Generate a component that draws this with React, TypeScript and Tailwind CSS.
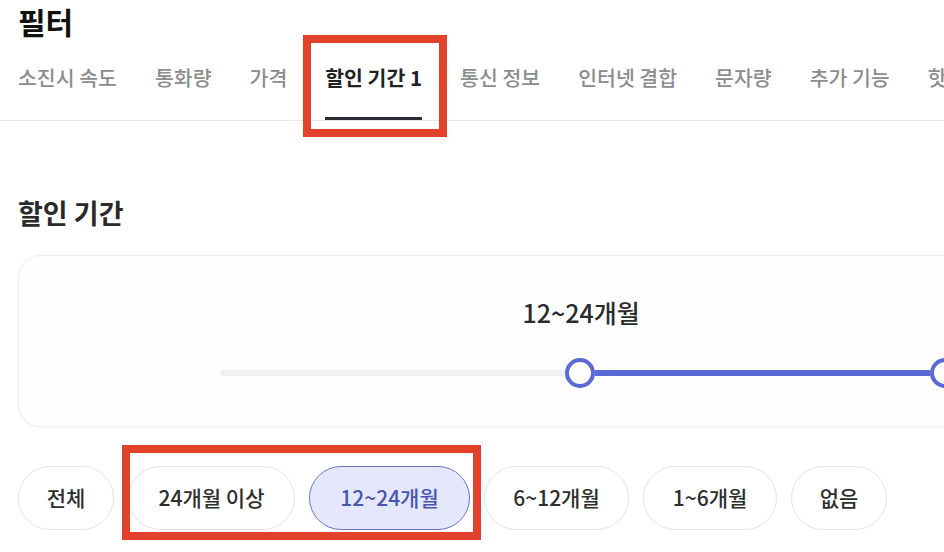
import React from "react";

const tabs = ["소진시 속도", "통화량", "가격", "할인 기간 1", "통신 정보", "인터넷 결합", "문자량", "추가 기능", "핫스팟"];

const chips = [
  { label: "전체", w: "w-[96px]", active: false },
  { label: "24개월 이상", w: "w-[167px]", active: false },
  { label: "12~24개월", w: "w-[161px]", active: true },
  { label: "6~12개월", w: "w-[145px]", active: false },
  { label: "1~6개월", w: "w-[134px]", active: false },
  { label: "없음", w: "w-[96px]", active: false },
];

export default function App() {
  return (
    <div
      className="relative w-[944px] h-[552px] overflow-hidden bg-white whitespace-nowrap"
      style={{ fontFamily: '"Noto Sans CJK KR", "Noto Sans", sans-serif' }}
    >
      {/* Title */}
      <div className="pt-[2px] pl-[18px] text-[30px] leading-[38px] font-bold text-[#111111]">필터</div>

      {/* Tabs */}
      <div className="flex gap-[38px] pl-[18px] border-b border-[#e8e8e8] h-[81px]">
        {tabs.map((t, i) =>
          i === 3 ? (
            <div
              key={t}
              className="pt-[24px] pb-[27px] border-b-[3px] border-[#2b2e35] text-[20.5px] leading-[26px] font-bold text-[#222222] h-[80px] box-border shrink-0"
            >
              {t}
            </div>
          ) : (
            <div
              key={t}
              className="pt-[24px] text-[20.5px] leading-[26px] font-medium text-[#8c8c8c] shrink-0"
            >
              {t}
            </div>
          )
        )}
      </div>

      {/* Section heading */}
      <div className="mt-[74px] pl-[18px] text-[27px] leading-[36px] font-bold text-[#2a2a2a]">할인 기간</div>

      {/* Card */}
      <div className="ml-[18px] mt-[24px] w-[1000px] h-[172px] rounded-[22px] border border-[#f0f0f0] bg-[#fdfdfd] shadow-[0_1px_4px_rgba(0,0,0,0.04)] pt-[39px] box-border">
        <div className="ml-[504px] w-[116px] flex justify-center text-[25px] leading-[34px] font-medium text-[#2b2b2b]">
          12~24개월
        </div>
        <div className="flex items-center ml-[202px] mt-[29px] h-[30px]">
          <div className="w-[344px] h-[6px] bg-[#f0f1f3]" />
          <div className="w-[30px] h-[30px] rounded-full border-[4px] border-[#5b69d6] bg-white box-border shrink-0" />
          <div className="w-[335px] h-[6px] bg-[#5b69d6]" />
          <div className="w-[30px] h-[30px] rounded-full border-[4px] border-[#5b69d6] bg-white box-border shrink-0" />
        </div>
      </div>

      {/* Chips */}
      <div className="flex gap-[14px] pl-[18px] mt-[39px]">
        {chips.map((c) => (
          <div
            key={c.label}
            className={
              c.active
                ? `${c.w} h-[64px] rounded-full border border-[#6a74c8] bg-[#e5e8fc] flex items-center justify-center text-[21px] font-medium text-[#4a55b3] box-border shrink-0`
                : `${c.w} h-[64px] rounded-full border border-[#e4e4e4] bg-white flex items-center justify-center text-[21px] font-medium text-[#2e2e2e] box-border shrink-0`
            }
          >
            {c.label}
          </div>
        ))}
      </div>

      {/* Annotation boxes */}
      <div className="absolute left-[303px] top-[35px] w-[144px] h-[102px] border-[8px] border-[#e2412c] pointer-events-none box-border" />
      <div className="absolute left-[122px] top-[445px] w-[359px] h-[95px] border-[8px] border-[#e2412c] pointer-events-none box-border" />
    </div>
  );
}
